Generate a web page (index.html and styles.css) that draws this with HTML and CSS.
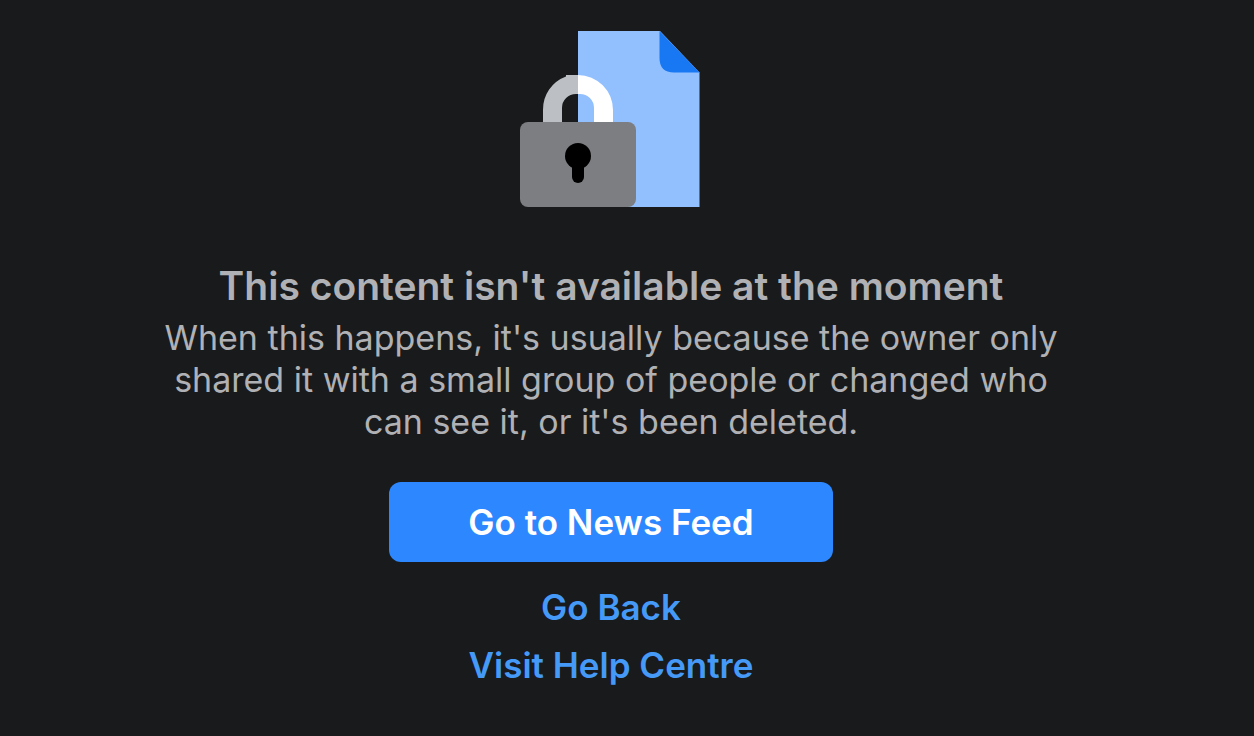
FILE: index.html
```html
<!DOCTYPE html>
<html lang="en-GB">
<head>
    <meta charset="UTF-8">
    <meta name="viewport" content="width=device-width, initial-scale=1.0">
    <title>Content not available</title>
    <link rel="stylesheet" href="styles.css">
</head>
<body>
    <main class="unavailable">
        <svg class="lock-art" viewBox="0 0 182 178" aria-hidden="true">
            <path fill="#92c0ff" d="M58 1h82l39.500 41.500V177H58z"/>
            <path fill="#1877f2" d="M139.500 1l40 41.500H154q-14.500 0-14.500-14.500z"/>
            <path fill="#bcc0c4" d="M23 92V80a35 35 0 0 1 23-33.500V45h12v19h-2a14 14 0 0 0-14 14v14z"/>
            <path fill="#fff" d="M58 45a35 35 0 0 1 35 35v12H74V78a14 14 0 0 0-14-14h-2z"/>
            <rect fill="#7d7e82" y="92" width="116" height="85" rx="8"/>
            <circle cx="58" cy="126" r="13"/>
            <rect x="52" y="126" width="12" height="27" rx="6"/>
        </svg>
        <h1>This content isn't available at the moment</h1>
        <p>When this happens, it's usually because the owner only shared it with a small group of people or changed who can see it, or it's been deleted.</p>
        <button class="feed-button" type="button">Go to News Feed</button>
        <a class="link" href="#back">Go Back</a>
        <a class="link" href="#help">Visit Help Centre</a>
    </main>
</body>
</html>
```
FILE: styles.css
```css
* {
    box-sizing: border-box;
    margin: 0;
    padding: 0;
}

body {
    background: #191a1b;
    color: #b0b1b5;
    font-family: Inter, Arial, sans-serif;
}

.unavailable {
    display: flex;
    flex-direction: column;
    align-items: center;
    padding: 30px 32px 30px 0;
    text-align: center;
}

.lock-art {
    width: 182px;
    height: 178px;
    margin-bottom: 53px;
}

h1 {
    font-size: 39px;
    line-height: 50px;
    font-weight: 600;
}

p {
    max-width: 900px;
    margin: 6px 0 39px;
    font-size: 34px;
    line-height: 42px;
}

.feed-button {
    width: 444px;
    max-width: 100%;
    height: 80px;
    margin-bottom: 16px;
    border: none;
    border-radius: 12px;
    background: #2d88ff;
    color: #fff;
    font-family: inherit;
    font-size: 35px;
    font-weight: 600;
    cursor: pointer;
}

.link {
    color: #4599f7;
    font-size: 35px;
    font-weight: 600;
    line-height: 58px;
    text-decoration: none;
}
```
